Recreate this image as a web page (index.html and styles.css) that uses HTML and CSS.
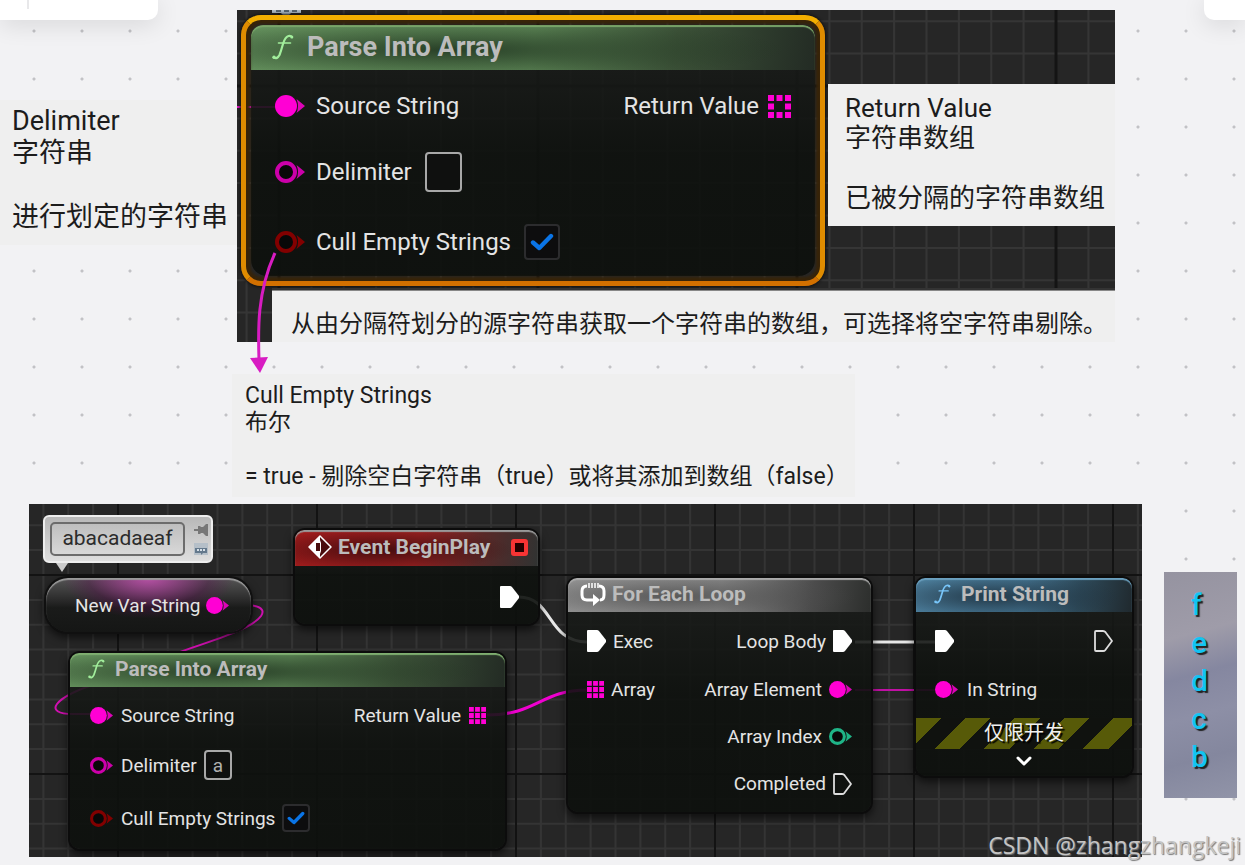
FILE: index.html
```html
<!DOCTYPE html>
<html lang="zh-CN">
<head>
<meta charset="utf-8">
<meta name="viewport" content="width=device-width, initial-scale=1">
<title>Parse Into Array</title>
<link rel="stylesheet" href="styles.css">
</head>
<body>
<svg class="defs" aria-hidden="true">
  <defs>
    <symbol id="pin-full" viewBox="0 0 30 22"><circle cx="11" cy="11" r="11" fill="currentColor"/><path d="M21.500 4 L30 11 L21.500 18 Q24.500 11 21.500 4Z" fill="currentColor" opacity=".85"/></symbol>
    <symbol id="pin-ring" viewBox="0 0 30 22"><circle cx="11" cy="11" r="9" fill="#080808" stroke="currentColor" stroke-width="4"/><path d="M21.500 4 L30 11 L21.500 18 Q24.500 11 21.500 4Z" fill="currentColor"/></symbol>
    <symbol id="pin-array" viewBox="0 0 23 23"><path fill="currentColor" d="M0 0h6.500v6.500H0zM8.250 0h6.500v6.500h-6.500zM16.500 0h6.500v6.500h-6.500zM0 8.250h6.500v6.500H0zM8.250 8.250h6.500v6.500h-6.500zM16.500 8.250h6.500v6.500h-6.500zM0 16.500h6.500v6.500H0zM8.250 16.500h6.500v6.500h-6.500zM16.500 16.500h6.500v6.500h-6.500z"/></symbol>
    <symbol id="pin-array-open" viewBox="0 0 23 23"><path fill="currentColor" d="M0 0h6v6H0zM8.500 0h6v6h-6zM17 0h6v6h-6zM0 8.500h6v6H0zM17 8.500h6v6h-6zM0 17h6v6H0zM8.500 17h6v6h-6zM17 17h6v6h-6z"/></symbol>
    <symbol id="exec-full" viewBox="0 0 19 22"><path fill="#fff" d="M1 0h9q1 0 2 1l7 9v2l-7 9q-1 1-2 1H1q-1 0-1-1V1q0-1 1-1z"/></symbol>
    <symbol id="exec-open" viewBox="0 0 19 22"><path fill="none" stroke="#ddd" stroke-width="1.800" stroke-linejoin="round" d="M2 1h7q1.500 0 2.500 1.200L18 11l-6.500 8.800Q10.500 21 9 21H2q-1 0-1-1V2q0-1 1-1z"/></symbol>
    <symbol id="func" viewBox="0 0 22 26"><g fill="none" stroke="currentColor" stroke-linecap="round"><path stroke-width="2.200" d="M2 23.500Q5 25.500 7.500 21Q9 17 11 10Q13 3 16.500 2Q19 1.500 20 3"/><path stroke-width="1.600" d="M6.500 9H18.500"/></g><circle cx="2" cy="23.200" r="1.700" fill="currentColor"/><circle cx="19.800" cy="3" r="1.500" fill="currentColor"/></symbol>
    <symbol id="check" viewBox="0 0 24 18"><path fill="none" stroke="#0a74e6" stroke-width="4.400" stroke-linecap="round" stroke-linejoin="round" d="M3 9.500L9.300 15L21 3"/></symbol>
    <pattern id="grid-large" width="259" height="259" patternUnits="userSpaceOnUse" x="42" y="76">
      <path stroke="#353535" stroke-width="2" d="M32.400 0V259M64.750 0V259M97.100 0V259M129.500 0V259M161.900 0V259M194.250 0V259M226.600 0V259M0 32.400H259M0 64.750H259M0 97.100H259M0 129.500H259M0 161.900H259M0 194.250H259M0 226.600H259"/>
      <path stroke="#141414" stroke-width="3" d="M0 0V259M0 0H259M259 0V259M0 259H259"/>
    </pattern>
    <pattern id="grid-small" width="199" height="199" patternUnits="userSpaceOnUse" x="89" y="71">
      <path stroke="#343434" stroke-width="2" d="M24.900 0V199M49.750 0V199M74.600 0V199M99.500 0V199M124.400 0V199M149.250 0V199M174.100 0V199M0 24.900H199M0 49.750H199M0 74.600H199M0 99.500H199M0 124.400H199M0 149.250H199M0 174.100H199"/>
      <path stroke="#131313" stroke-width="2" d="M0 0V199M0 0H199M199 0V199M0 199H199"/>
    </pattern>
  </defs>
</svg>

<main class="board">
  <div class="toolbar toolbar-left"><span class="toolbar-rule"></span></div>
  <div class="toolbar toolbar-right"></div>

  <section class="note note-delimiter">
    <p>Delimiter</p><p>字符串</p><p>&nbsp;</p><p>进行划定的字符串</p>
  </section>

  <section class="graph graph-top">
    <svg class="backdrop" aria-hidden="true">
      <rect width="100%" height="100%" fill="url(#grid-large)"/>
      <path d="M0 97H40" stroke="#e010c0" stroke-width="2"/>
      <path d="M35 0H64V3H54L49 8L44 3H35Z" fill="#a9b7c1"/>
      <path d="M39 1H60" stroke="#56636e" stroke-width="2" stroke-dasharray="5 3"/>
    </svg>
    <article class="node large selected node-parse-large">
      <header class="title green"><svg class="func"><use href="#func"/></svg><h2>Parse Into Array</h2></header>
      <div class="pins">
        <div class="row"><span class="pin"><svg class="dot pink"><use href="#pin-full"/></svg>Source String</span><span class="pin">Return Value<svg class="array pink"><use href="#pin-array-open"/></svg></span></div>
        <div class="row"><label class="pin"><svg class="dot magenta"><use href="#pin-ring"/></svg>Delimiter<input class="field" type="text" value=""></label></div>
        <div class="row"><label class="pin"><svg class="dot red"><use href="#pin-ring"/></svg>Cull Empty Strings<span class="tick"><input type="checkbox" checked><svg><use href="#check"/></svg></span></label></div>
      </div>
    </article>
    <section class="note note-return">
      <p>Return Value</p><p>字符串数组</p><p>&nbsp;</p><p>已被分隔的字符串数组</p>
    </section>
    <section class="note note-summary"><p>从由分隔符划分的源字符串获取一个字符串的数组，可选择将空字符串剔除。</p></section>
  </section>

  <section class="note note-cull">
    <p>Cull Empty Strings</p><p>布尔</p><p>&nbsp;</p><p>= true - 剔除空白字符串（true）或将其添加到数组（false）</p>
  </section>

  <svg class="arrow" viewBox="0 0 30 122" aria-hidden="true">
    <path d="M26 1C8 40 9 78 10 108" fill="none" stroke="#d81cc2" stroke-width="3"/>
    <path d="M1 106L19 105L11 121Z" fill="#d81cc2"/>
  </svg>

  <section class="graph graph-bottom">
    <svg class="backdrop" aria-hidden="true">
      <rect width="100%" height="100%" fill="url(#grid-small)"/>
      <g fill="none" stroke-width="2">
        <path stroke="#d010b0" d="M202 100C226 100 238 103 232 112C218 132 130 150 72 178C22 194 14 210 44 210H62"/>
        <path stroke="#e8e8e8" stroke-width="3" d="M490 93C524 93 518 138 558 138"/>
        <path stroke="#f000d0" stroke-width="3" d="M458 211C508 211 512 186 558 186"/>
        <path stroke="#e8e8e8" stroke-width="3" d="M826 138H908"/>
        <path stroke="#c010a4" d="M826 186H908"/>
      </g>
    </svg>

    <div class="bubble">
      <output>abacadaeaf</output>
      <span class="bubble-icons">
        <svg viewBox="0 0 14 12"><path d="M0 5H4V2H6L7 3H9L12 0H14V12H12L9 9H7L6 10H4V7H0Z" fill="#777"/></svg>
        <svg viewBox="0 0 14 12"><path d="M0 0H14V12H0Z" fill="#b5bfc8"/><path d="M1 5H13V10H9L7 12V10H1Z" fill="#64798c"/><path d="M3 7H11" stroke="#d7e0e8" stroke-width="2" stroke-dasharray="2 1"/></svg>
      </span>
    </div>
    <article class="node variable"><span class="pin">New Var String<svg class="dot pink"><use href="#pin-full"/></svg></span></article>

    <article class="node node-event">
      <header class="title crimson">
        <svg class="event-icon" viewBox="0 0 24 24"><path d="M12 1L23 12L12 23L1 12Z" fill="#4a0c0d" stroke="#fff" stroke-width="1.500" stroke-linejoin="round"/><path d="M12 1V8H8V16H12V23L1 12Z" fill="#fff"/><path d="M12 5L13 8V16L12 19Z" fill="#fff"/></svg>
        <h2>Event BeginPlay</h2><span class="delegate"></span>
      </header>
      <div class="event-body"><svg class="exec"><use href="#exec-full"/></svg></div>
    </article>

    <article class="node node-parse">
      <header class="title green"><svg class="func"><use href="#func"/></svg><h2>Parse Into Array</h2></header>
      <div class="pins">
        <div class="row"><span class="pin"><svg class="dot pink"><use href="#pin-full"/></svg>Source String</span><span class="pin">Return Value<svg class="array pink"><use href="#pin-array"/></svg></span></div>
        <div class="row"><label class="pin"><svg class="dot magenta"><use href="#pin-ring"/></svg>Delimiter<input class="field" type="text" value="a"></label></div>
        <div class="row"><label class="pin"><svg class="dot red"><use href="#pin-ring"/></svg>Cull Empty Strings<span class="tick"><input type="checkbox" checked><svg><use href="#check"/></svg></span></label></div>
      </div>
    </article>

    <article class="node node-loop">
      <header class="title gray">
        <svg class="loop-icon" viewBox="0 0 26 24"><path d="M7 4Q2 4 2 9V13Q2 18 7 18H14M20 18Q24 18 24 13V9Q24 4 19 4" fill="none" stroke="#fff" stroke-width="3"/><path d="M13 12L20 18L13 24Z" fill="#fff"/><path d="M9 1V6M12 1V6M15 1V6M18 1V6" stroke="#fff" stroke-width="1.500"/></svg>
        <h2>For Each Loop</h2>
      </header>
      <div class="pins">
        <div class="row"><span class="pin"><svg class="exec"><use href="#exec-full"/></svg>Exec</span><span class="pin">Loop Body<svg class="exec"><use href="#exec-full"/></svg></span></div>
        <div class="row"><span class="pin"><svg class="array pink"><use href="#pin-array"/></svg>Array</span><span class="pin">Array Element<svg class="dot pink"><use href="#pin-full"/></svg></span></div>
        <div class="row end"><span class="pin">Array Index<svg class="dot teal"><use href="#pin-ring"/></svg></span></div>
        <div class="row end"><span class="pin">Completed<svg class="exec"><use href="#exec-open"/></svg></span></div>
      </div>
    </article>

    <article class="node node-print">
      <header class="title blue"><svg class="func"><use href="#func"/></svg><h2>Print String</h2></header>
      <div class="pins">
        <div class="row"><svg class="exec"><use href="#exec-full"/></svg><svg class="exec"><use href="#exec-open"/></svg></div>
        <div class="row"><span class="pin"><svg class="dot pink"><use href="#pin-full"/></svg>In String</span></div>
      </div>
      <p class="dev-only">仅限开发</p>
      <button class="expand" type="button" aria-label="展开"><svg viewBox="0 0 16 10"><path d="M2 2L8 8L14 2" fill="none" stroke="#fff" stroke-width="3" stroke-linecap="round" stroke-linejoin="round"/></svg></button>
    </article>
  </section>

  <ol class="output"><li>f</li><li>e</li><li>d</li><li>c</li><li>b</li></ol>
  <p class="watermark">CSDN @zhangzhangkeji</p>
</main>
</body>
</html>
```
FILE: styles.css
```css
* { box-sizing: border-box; }
body { margin: 0; background: #f2f2f4; font-family: Roboto, "Noto Sans CJK SC", sans-serif; }
p, h2, ol { margin: 0; padding: 0; }
svg { display: block; flex: none; }
.defs { position: absolute; width: 0; height: 0; }

/* Whiteboard: items are pinned at free positions */
.board {
  position: relative;
  min-height: 100vh;
  overflow: hidden;
  background-color: #f2f2f4;
  background-image: radial-gradient(circle, #c2c2c5 1px, transparent 2px);
  background-size: 48px 48px;
  background-position: 10px 7px;
}
.toolbar { position: absolute; top: 0; height: 20px; background: #fff; box-shadow: 0 4px 24px rgba(0, 0, 0, .12); }
.toolbar-left { left: 0; width: 158px; border-radius: 0 0 10px 0; padding-left: 27px; }
.toolbar-right { left: 1204px; right: 0; border-radius: 0 0 0 10px; }
.toolbar-rule { display: block; width: 2px; height: 9px; background: #e8e8ea; }

.note { position: absolute; background: #efefef; color: #1c1c1c; white-space: nowrap; }
.note-delimiter { left: 0; top: 100px; width: 237px; padding: 5px 0 12px 12px; font-size: 27px; line-height: 32px; }
.note-return { left: 591px; top: 74px; width: 287px; padding: 9px 0 13px 17px; font-size: 26px; line-height: 30px; }
.note-summary { left: 35px; right: 0; top: 281px; padding: 16px 0 1px 19px; font-size: 24px; line-height: 34px; box-shadow: 0 -1px 0 #888, 0 -3px 0 #333; }
.note-cull { left: 232px; top: 374px; width: 623px; padding: 8px 0 7px 13px; font-size: 23px; line-height: 27px; }
.arrow { position: absolute; left: 249px; top: 252px; width: 30px; height: 122px; }

.graph { position: absolute; background: #262626; overflow: hidden; }
.graph-top { left: 237px; top: 10px; width: 878px; height: 332px; }
.graph-bottom { left: 29px; top: 504px; width: 1113px; height: 353px; }
.backdrop { position: absolute; inset: 0; width: 100%; height: 100%; }

/* Nodes */
.node {
  position: absolute;
  border-radius: 10px;
  background: linear-gradient(rgba(28, 30, 28, .88), rgba(14, 17, 14, .9) 50%, rgba(13, 16, 13, .92));
  color: #e4e4e4;
  font-size: 19px;
  box-shadow: 0 0 0 2px #0c0c0c, 0 4px 8px 2px rgba(0, 0, 0, .6);
}
.title { display: flex; align-items: center; height: 34px; padding-bottom: 2px; border-radius: 9px 9px 0 0; }
.title h2 { font-size: 21px; font-weight: 700; line-height: 24px; color: #bcbcbc; white-space: nowrap; }
.green { color: #a2ee9c; box-shadow: inset 0 2px 1px #7fae70; background: radial-gradient(ellipse 60% 70% at 35% 55%, rgba(30, 50, 30, .85), transparent), linear-gradient(100deg, #6b9a63 0%, #648f5c 50%, #3c5238 75%, #232b24 100%); }
.crimson { box-shadow: inset 0 2px 1px #999; background: radial-gradient(ellipse 55% 60% at 35% 55%, rgba(60, 10, 12, .9), transparent), linear-gradient(100deg, #a31c1c 0%, #9c2222 50%, #5a2827 75%, #303332 100%); }
.gray { box-shadow: inset 0 2px 1px #aaa; background: radial-gradient(ellipse 60% 70% at 35% 55%, rgba(75, 75, 75, .8), transparent), linear-gradient(100deg, #999 0%, #8c8c8c 50%, #4c4c4c 80%, #2c2e2c 100%); }
.blue { color: #78c6fa; box-shadow: inset 0 2px 1px #6ba0bf; background: radial-gradient(ellipse 60% 70% at 35% 55%, rgba(28, 45, 58, .85), transparent), linear-gradient(100deg, #5288a8 0%, #487a98 50%, #2e4a5a 75%, #20292e 100%); }
.func { width: 17px; height: 20px; margin: 0 10px 0 18px; }
.pins { display: grid; }
.row { display: flex; align-items: center; justify-content: space-between; }
.end { justify-content: flex-end; }
.pin { display: flex; align-items: center; white-space: nowrap; }
.dot { width: 23px; height: 17px; }
.array { width: 17px; height: 17px; }
.exec { width: 19px; height: 22px; }
.pink { color: #ff00d4; }
.magenta { color: #cc00aa; }
.red { color: #820000; }
.teal { color: #1fb487; }

.field { margin: 0 0 0 7px; width: 28px; height: 30px; padding: 0; border: 2px solid #a8a8a8; border-radius: 4px; background: #0f100f; color: #b0b0b0; font: inherit; text-align: center; }
.tick { display: grid; place-items: center; margin-left: 7px; }
.tick > * { grid-area: 1 / 1; }
.tick input { appearance: none; margin: 0; width: 28px; height: 28px; border: 2px solid #2c2c2e; border-radius: 4px; background: #0d0d0e; }
.tick svg { position: relative; width: 18px; height: 14px; pointer-events: none; }

/* Enlarged, selected node */
.large { font-size: 24px; }
.large .title { height: 45px; border-radius: 12px 12px 0 0; }
.large .title h2 { font-size: 27px; line-height: 30px; }
.large .func { width: 22px; height: 26px; margin: 0 13px 0 21px; }
.large .dot { width: 30px; height: 22px; margin-right: 11px; }
.large .array { width: 23px; height: 23px; margin-left: 9px; }
.large .field { width: 37px; height: 40px; margin-left: 13px; }
.large .tick { margin-left: 13px; }
.large .tick input { width: 36px; height: 36px; }
.large .tick svg { width: 24px; height: 18px; }
.selected { box-shadow: none; border-radius: 16px; background: linear-gradient(rgba(28, 30, 28, .88), rgba(14, 17, 14, .9) 50%, rgba(13, 16, 13, .93)); }
.selected::before {
  content: "";
  position: absolute;
  inset: -10px;
  border: 5px solid;
  border-color: #f2ae00 #df8c00 #d27000;
  border-radius: 20px;
  box-shadow: inset 0 0 3px 4px #382408, 0 0 3px 1px #111;
  pointer-events: none;
}
.node-parse-large { left: 14px; top: 15px; width: 564px; }
.node-parse-large .pins { grid-template-rows: 72px 60px 74px; padding: 0 24px 0 24px; }
.node-parse-large .row:last-child { padding-top: 6px; }

.node-parse { left: 41px; top: 149px; width: 435px; }
.node-parse .pins { grid-template-rows: 56px 44px 62px; padding: 0 19px 0 20px; }
.node-parse .dot { margin-right: 8px; }
.node-parse .array { margin-left: 8px; }

.node-event { left: 266px; top: 26px; width: 243px; height: 94px; }
.node-event .title { height: 36px; padding-right: 10px; }
.event-icon { width: 24px; height: 24px; margin: 0 6px 0 13px; }
.delegate { width: 17px; height: 17px; margin-left: auto; border: 4px solid #f83434; border-radius: 3px; background: #260000; }
.event-body { display: flex; justify-content: flex-end; padding: 20px 19px 0 0; }

.node-loop { left: 539px; top: 74px; width: 303px; }
.loop-icon { width: 26px; height: 24px; margin: 0 6px 0 12px; }
.node-loop .pins { grid-template-rows: 48px 48px 47px 47px; padding: 5px 19px 5px 19px; }
.node-loop .pin { gap: 7px; }

.node-print { left: 887px; top: 74px; width: 216px; }
.node-print .pins { grid-template-rows: 48px 48px; padding: 5px 19px 5px 19px; }
.node-print .pin { gap: 9px; }
.dev-only {
  height: 31px;
  line-height: 30px;
  font-size: 20px;
  text-align: center;
  color: #f0f0f0;
  text-shadow: 2px 2px 1px #000;
  background: repeating-linear-gradient(135deg, #575a08 0 18px, #10120f 18px 35px);
}
.expand { display: flex; width: 100%; justify-content: center; padding: 7px 0 10px; border: 0; background: none; }
.expand svg { width: 16px; height: 10px; }

.variable {
  left: 17px;
  top: 74px;
  width: 205px;
  height: 54px;
  border-radius: 22px;
  padding: 0 23px 0 29px;
  display: flex;
  align-items: center;
  background: radial-gradient(ellipse 42% 75% at 50% 0, rgba(200, 80, 180, .85), rgba(90, 20, 80, .4) 70%, transparent), linear-gradient(#555, #262626 45%, #1a1b1a 55%, #151615);
  box-shadow: inset 0 2px 1px #999, 0 0 0 2px #101010, 0 4px 8px 2px rgba(0, 0, 0, .6);
}
.variable .pin { gap: 5px; }

.bubble {
  position: absolute;
  left: 14px;
  top: 11px;
  width: 170px;
  height: 48px;
  padding: 5px 3px 5px 5px;
  display: flex;
  justify-content: space-between;
  align-items: center;
  border: 2px solid #eee;
  border-radius: 6px;
  background: linear-gradient(#b8b8b8, #dedede);
}
.bubble::after { content: ""; position: absolute; left: 11px; top: 46px; border: 6px solid transparent; border-top: 9px solid #ccc; border-bottom: 0; }
.bubble output { width: 135px; height: 34px; border: 2px solid #6c6c6c; border-radius: 5px; font-size: 21px; line-height: 29px; text-align: center; color: #2c2c2c; }
.bubble-icons { display: grid; gap: 7px; }
.bubble-icons svg { width: 14px; height: 12px; }

.output {
  position: absolute;
  left: 1164px;
  top: 572px;
  width: 73px;
  height: 226px;
  padding: 14px 0 0 27px;
  list-style: none;
  font-size: 30px;
  font-weight: 500;
  line-height: 38px;
  color: #12c4f2;
  text-shadow: 2px 2px 1px #222;
  background: linear-gradient(165deg, #9593a0, #9f9ca9 28%, #8587a0 45%, #8d8fa6 62%, #84879e 80%, #9194a8);
}
.watermark { position: absolute; right: 4px; bottom: 3px; font-size: 23px; line-height: 34px; color: #c4c4c4; text-shadow: 1px 1px 1px #777; font-family: "Open Sans", sans-serif; white-space: nowrap; }
```
